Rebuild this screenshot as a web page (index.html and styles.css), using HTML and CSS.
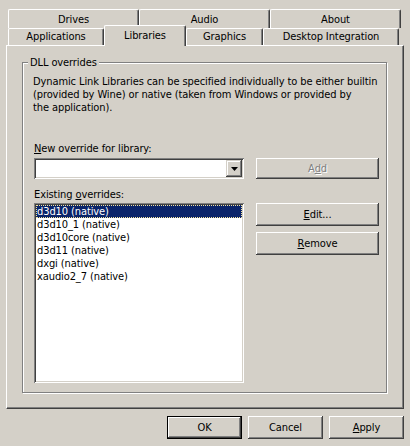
FILE: index.html
```
<!DOCTYPE html>
<html>
<head>
<meta charset="utf-8">
<link rel="stylesheet" href="styles.css">
</head>
<body>
<div class="window">
  <div class="tabstrip">
    <div class="tabrow row1">
      <div class="tab w131">Drives</div>
      <div class="tab w131">Audio</div>
      <div class="tab w131">About</div>
    </div>
    <div class="tabrow row2">
      <div class="tab w96">Applications</div>
      <div class="tab w82 selected">Libraries</div>
      <div class="tab w77">Graphics</div>
      <div class="tab w136">Desktop Integration</div>
    </div>
  </div>
  <div class="panel">
    <div class="group">
      <div class="caption">DLL overrides</div>
      <p class="desc">Dynamic Link Libraries can be specified individually to be either builtin<br>(provided by Wine) or native (taken from Windows or provided by<br>the application).</p>
      <div class="form">
        <div class="label first"><u>N</u>ew override for library:</div>
        <div class="combo">
          <div class="combo-field"></div>
          <div class="combo-btn">
            <svg width="7" height="4" viewBox="0 0 7 4"><polygon points="0,0 7,0 3.5,4" fill="#000"/></svg>
          </div>
        </div>
        <div class="btn btn-add disabled">A<u>d</u>d</div>
        <div class="label second">Existing <u>o</u>verrides:</div>
        <div class="listbox">
          <div class="item sel">d3d10 (native)</div>
          <div class="item">d3d10_1 (native)</div>
          <div class="item">d3d10core (native)</div>
          <div class="item">d3d11 (native)</div>
          <div class="item">dxgi (native)</div>
          <div class="item">xaudio2_7 (native)</div>
        </div>
        <div class="side-buttons">
          <div class="btn"><u>E</u>dit...</div>
          <div class="btn"><u>R</u>emove</div>
        </div>
      </div>
    </div>
  </div>
  <div class="footer">
    <div class="btn default">OK</div>
    <div class="btn">Cancel</div>
    <div class="btn"><u>A</u>pply</div>
  </div>
</div>
</body>
</html>
```
FILE: styles.css
```
* { box-sizing: border-box; }
html, body { margin: 0; padding: 0; }
body {
  width: 410px;
  height: 446px;
  overflow: hidden;
  background: #d4d0c8;
  color: #000;
  font-family: "DejaVu Sans Condensed", "DejaVu Sans", sans-serif;
  font-stretch: condensed;
  font-size: 11px;
  line-height: 13px;
  letter-spacing: -0.1px;
}
u { text-decoration: underline; text-underline-offset: 1px; }

.window { padding-top: 9px; }

.tabstrip {
  margin-left: 8px;
  position: relative;
  z-index: 1;
}
.tabrow { display: flex; align-items: flex-start; }
.row1 { height: 19px; }
.row2 { height: 17px; }

.tab {
  background: #d4d0c8;
  border-top: 1px solid #fff;
  border-left: 1px solid #fff;
  border-right: 1px solid #404040;
  border-radius: 2px 2px 0 0;
  box-shadow: inset -1px 0 0 #808080;
  text-align: center;
  white-space: nowrap;
}
.row1 .tab { height: 19px; padding-top: 3px; }
.row2 .tab { height: 17px; padding-top: 1px; }
.row2 .tab.selected {
  height: 21px;
  margin-top: -3px;
  padding-top: 3px;
}
.w131 { width: 131px; }
.w96 { width: 96px; }
.w82 { width: 82px; }
.w77 { width: 77px; }
.w136 { width: 136px; }

.panel {
  margin-left: 6px;
  width: 398px;
  height: 364px;
  border-top: 1px solid #fff;
  border-left: 1px solid #fff;
  border-right: 1px solid #404040;
  border-bottom: 1px solid #404040;
  box-shadow: inset -1px -1px 0 #808080;
  padding: 16px 0 0 15px;
}

.group {
  position: relative;
  width: 365px;
  height: 331px;
  border: 1px solid #808080;
  box-shadow: 1px 1px 0 #fff, inset 1px 1px 0 #fff;
  padding: 12px 0 0 10px;
}
.caption {
  position: absolute;
  left: 5px;
  top: -7px;
  padding: 0 2px;
  background: #d4d0c8;
  white-space: nowrap;
}
.desc {
  margin: 0;
  white-space: nowrap;
}

.form {
  display: grid;
  grid-template-columns: 210px 123px;
  column-gap: 12px;
  padding-left: 1px;
}
.label { grid-column: 1; height: 13px; white-space: nowrap; }
.label.first { margin-top: 28px; }
.label.second { margin-top: 9px; }

.combo {
  grid-column: 1;
  margin-top: 3px;
  height: 21px;
  display: flex;
  padding: 2px;
  background: #fff;
  box-shadow: inset 1px 1px 0 #808080, inset -1px -1px 0 #fff,
              inset 2px 2px 0 #404040, inset -2px -2px 0 #d4d0c8;
}
.combo-field { flex: 1; }
.combo-btn {
  width: 16px;
  height: 17px;
  background: #d4d0c8;
  display: flex;
  align-items: center;
  justify-content: center;
  box-shadow: inset -1px -1px 0 #404040, inset 1px 1px 0 #d4d0c8,
              inset -2px -2px 0 #808080, inset 2px 2px 0 #fff;
}
.combo-btn svg { display: block; margin-top: 1px; }

.btn {
  width: 75px;
  height: 23px;
  background: #d4d0c8;
  display: flex;
  align-items: center;
  justify-content: center;
  white-space: nowrap;
  box-shadow: inset -1px -1px 0 #404040, inset 1px 1px 0 #fff,
              inset -2px -2px 0 #808080, inset 2px 2px 0 #d4d0c8;
}
.btn.default {
  box-shadow: inset 0 0 0 1px #000,
              inset -2px -2px 0 #404040, inset 2px 2px 0 #fff,
              inset -3px -3px 0 #808080;
}
.btn-add {
  grid-column: 2;
  grid-row: 2;
  margin-top: 3px;
  width: 123px;
  height: 21px;
}
.disabled { color: #808080; text-shadow: 1px 1px 0 #fff; }

.listbox {
  grid-column: 1;
  margin-top: 2px;
  height: 180px;
  padding: 2px;
  background: #fff;
  box-shadow: inset 1px 1px 0 #808080, inset -1px -1px 0 #fff,
              inset 2px 2px 0 #404040, inset -2px -2px 0 #d4d0c8;
}
.item {
  height: 13px;
  padding-left: 1px;
  white-space: nowrap;
}
.item.sel {
  background: #0a246a;
  color: #fff;
  outline: 1px dotted #f4e49c;
  outline-offset: -1px;
}

.side-buttons {
  grid-column: 2;
  grid-row: 4;
  margin-top: 2px;
  display: flex;
  flex-direction: column;
  gap: 6px;
}
.side-buttons .btn { width: 123px; }

.footer {
  display: flex;
  justify-content: flex-end;
  gap: 6px;
  padding-right: 6px;
  margin-top: 7px;
}
```
